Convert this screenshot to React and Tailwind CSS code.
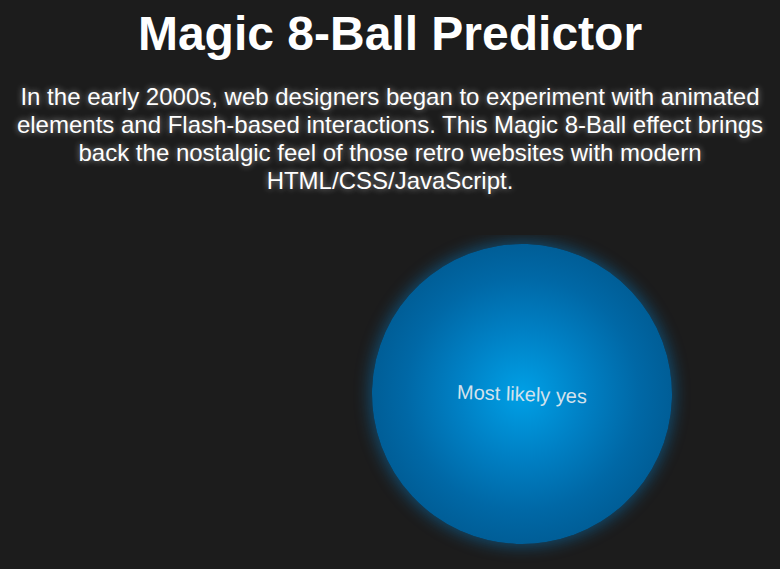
export default function App() {
  return (
    <div
      className="min-h-[569px] w-full bg-[#1c1c1c] text-white flex flex-col items-center overflow-hidden"
      style={{ fontFamily: '"Liberation Sans", Arial, sans-serif' }}
    >
      {/* Header */}
      <h1 className="mt-[10px] text-[48px] leading-[48px] font-bold text-center">
        Magic 8-Ball Predictor
      </h1>
      <p className="mt-[25px] px-2 text-[24px] leading-[28px] text-center [text-shadow:0_0_6px_rgba(255,255,255,0.55)]">
        In the early 2000s, web designers began to experiment with animated
        elements and Flash-based interactions. This Magic 8-Ball effect brings
        back the nostalgic feel of those retro websites with modern
        HTML/CSS/JavaScript.
      </p>

      {/* Ball stage */}
      <div className="mt-[40px] w-full flex-1 flex justify-center overflow-hidden pt-[9px] pb-6">
        <div className="w-[300px] h-[300px] shrink-0 rounded-full translate-x-[132px] rotate-[2deg] flex items-center justify-center bg-[radial-gradient(circle_at_50%_50%,#00a0e6_0%,#0080c4_30%,#0068a6_55%,#005b93_75%,#005a90_100%)] shadow-[0_0_16px_2px_rgba(0,150,240,0.42)]">
          <span className="text-[20px] leading-none text-[#d4e2ec]">
            Most likely yes
          </span>
        </div>
      </div>
    </div>
  );
}
